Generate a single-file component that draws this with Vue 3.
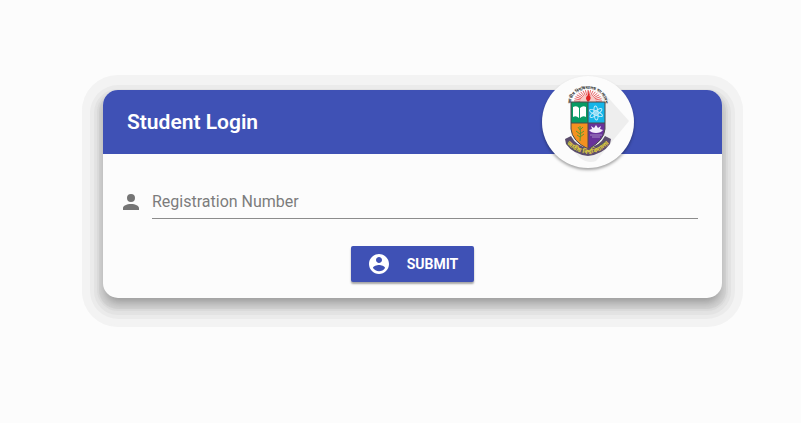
<template>
  <main class="login-page">
    <form class="login-card" @submit.prevent="handleSubmit">
      <header class="login-header">
        <h1>Student Login</h1>
        <div class="logo">
          <svg viewBox="0 0 92 92" role="img" aria-label="জাতীয় বিশ্ববিদ্যালয়">
            <defs>
              <clipPath id="shield-clip">
                <path d="M29 26H63V53Q62 65 46 73Q30 65 29 53Z" />
              </clipPath>
              <path id="motto-arc" d="M29 27A17 14 0 0 1 63 27" />
              <path id="ribbon-arc" d="M24 66Q31 76 46 78Q61 76 68 66" />
            </defs>
            <path class="long-shadow" d="M62 17L87 45L54 85Q46 88 38 82L26 69Z" />

            <!-- sun -->
            <g class="rays">
              <line v-for="ray in rays" :key="ray.id" :x1="ray.x1" :y1="ray.y1" :x2="ray.x2" :y2="ray.y2" />
            </g>
            <path class="sun" d="M38 26A8 7 0 0 1 54 26Z" />
            <path class="flame" d="M46 26Q42 22 46 19Q45 16 47 14Q46 18 48 20Q50 23 46 26Z" />
            <text class="motto">
              <textPath href="#motto-arc" startOffset="50%" text-anchor="middle">জাতীয় বিশ্ববিদ্যালয় বাংলাদেশ</textPath>
            </text>

            <!-- shield -->
            <g clip-path="url(#shield-clip)">
              <rect x="28" y="25" width="18" height="22" fill="#069b65" />
              <rect x="46" y="25" width="18" height="22" fill="#13b5e8" />
              <rect x="28" y="47" width="18" height="28" fill="#f59120" />
              <rect x="46" y="47" width="18" height="28" fill="#68329a" />
            </g>
            <path class="book" d="M31 31Q35 29 37 32V42Q34 39 31 41ZM38 32Q41 29 44 31V41Q41 39 38 42Z" />
            <g class="atom">
              <ellipse cx="54" cy="37" rx="7" ry="2" transform="rotate(25 54 37)" />
              <ellipse cx="54" cy="37" rx="7" ry="2" transform="rotate(85 54 37)" />
              <ellipse cx="54" cy="37" rx="7" ry="2" transform="rotate(145 54 37)" />
              <circle cx="54" cy="37" r="1" />
            </g>
            <g class="plant">
              <path d="M38 65Q39 58 38 50" />
              <path d="M38 54L36 51M38 54L41 51M38 58L34 55M38 58L42 55M38 61L35 59M38 61L42 58" />
            </g>
            <path class="lotus" d="M47 54L50 53L49 50L52 52L54 49L56 52L59 50L58 53L61 54Q59 57 54 57Q49 57 47 54Z" />
            <path class="water" d="M48 59H60M50 61H58" />
            <path class="shield-outline" d="M29 26H63V53Q62 65 46 73Q30 65 29 53ZM46 26V72M29 47H63" />

            <!-- ribbon -->
            <path class="ribbon" d="M23 63L29 60Q34 70 46 72Q58 70 63 60L69 63L68 68Q61 78 46 80Q31 78 24 68Z" />
            <text class="ribbon-text">
              <textPath href="#ribbon-arc" startOffset="50%" text-anchor="middle">জাতীয় বিশ্ববিদ্যালয়</textPath>
            </text>
          </svg>
        </div>
      </header>

      <div class="login-body">
        <div class="field">
          <label for="registration" aria-label="Registration Number">
            <svg class="icon" viewBox="0 0 24 24" aria-hidden="true">
              <path d="M12 4a4 4 0 1 1 0 8 4 4 0 0 1 0-8m0 10c4.42 0 8 1.79 8 4v2H4v-2c0-2.21 3.58-4 8-4Z" />
            </svg>
          </label>
          <input id="registration" v-model="registration" type="text" placeholder="Registration Number" />
        </div>
        <button class="submit-btn" type="submit">
          <svg class="icon" viewBox="0 0 24 24" aria-hidden="true">
            <path d="M12 2C6.48 2 2 6.48 2 12s4.48 10 10 10 10-4.48 10-10S17.52 2 12 2m0 3c1.66 0 3 1.34 3 3s-1.34 3-3 3-3-1.34-3-3 1.34-3 3-3m0 14.2c-2.5 0-4.71-1.28-6-3.22.03-1.99 4-3.08 6-3.08s5.97 1.09 6 3.08a7.2 7.2 0 0 1-6 3.22Z" />
          </svg>
          <span>Submit</span>
        </button>
      </div>
    </form>
  </main>
</template>

<script setup>
import { ref } from 'vue'

const registration = ref('')

// Rays fan out over the top of the shield
const rays = Array.from({ length: 17 }, (_, i) => {
  const angle = Math.PI * (1 + (i + 0.5) / 17)
  return {
    id: i,
    x1: 46 + Math.cos(angle) * 6,
    y1: 26 + Math.sin(angle) * 6,
    x2: 46 + Math.cos(angle) * 14,
    y2: 26 + Math.sin(angle) * 12
  }
})

const handleSubmit = () => {
  registration.value = registration.value.trim()
}
</script>

<style>
body {
  margin: 0;
  background: #fcfcfc;
}
</style>

<style scoped>
.login-page {
  padding: 90px 79px 90px 103px;
  font-family: Roboto, "Noto Sans", sans-serif;
}

.login-card {
  border-radius: 15px;
  background: #fcfcfc;
  box-shadow:
    0 7px 8px -4px rgba(0, 0, 0, 0.2),
    0 7px 8px 0 rgba(0, 0, 0, 0.1),
    0 7px 0 4px #d4d4d4,
    0 7px 0 6px #dcdcdc,
    0 8px 0 9px #e3e3e3,
    0 8px 0 13px #ebebeb,
    0 6px 0 21px #f3f3f3,
    0 8px 0 21px #f3f3f3;
}

.login-header {
  position: relative;
  display: flex;
  align-items: center;
  height: 64px;
  padding: 0 24px;
  border-radius: 15px 15px 0 0;
  background: #3f51b5;
  color: #fff;
}

.login-header h1 {
  margin: 0;
  font-size: 21px;
  font-weight: 600;
  line-height: 24px;
}

.logo {
  position: absolute;
  top: -14px;
  right: 88px;
  width: 92px;
  height: 92px;
  border-radius: 50%;
  background: #fcfcfc;
  box-shadow: 0 2px 3px rgba(0, 0, 0, 0.35);
}

.logo svg {
  display: block;
  width: 100%;
  height: 100%;
}

.long-shadow {
  fill: #eeeeee;
}

.rays {
  stroke: #e86060;
  stroke-width: 1;
}

.sun {
  fill: #f7c9c5;
}

.flame {
  fill: #e02424;
}

.motto {
  fill: #333;
  font-family: "Noto Sans Bengali", "Noto Sans", sans-serif;
  font-size: 4px;
  font-weight: 700;
}

.book {
  fill: #fff;
}

.atom {
  fill: none;
  stroke: #c4ecfa;
  stroke-width: 1;
}

.plant {
  fill: none;
  stroke: #5c9a2e;
  stroke-width: 1;
}

.lotus {
  fill: #f4eefa;
}

.water {
  stroke: #a78ac5;
  stroke-width: 1;
}

.shield-outline {
  fill: none;
  stroke: #4b4b4b;
  stroke-width: 1;
}

.ribbon {
  fill: #5b4d6c;
}

.ribbon-text {
  fill: #e0d03c;
  font-family: "Noto Sans Bengali", "Noto Sans", sans-serif;
  font-size: 6px;
  font-weight: 700;
}

.login-body {
  display: flex;
  flex-direction: column;
  align-items: center;
  gap: 27px;
  padding: 33px 24px 16px 16px;
}

.field {
  display: flex;
  align-items: center;
  align-self: stretch;
  gap: 9px;
}

.field label {
  display: flex;
  padding-bottom: 2px;
  color: #757575;
}

.icon {
  width: 24px;
  height: 24px;
  fill: currentColor;
}

.field input {
  flex: 1;
  min-width: 0;
  height: 32px;
  box-sizing: border-box;
  padding: 0 0 2px;
  border: 0;
  border-bottom: 1px solid #8c8c8c;
  border-radius: 0;
  background: transparent;
  color: #212121;
  font: inherit;
  font-size: 16px;
  outline: none;
}

.field input::placeholder {
  color: #7c7c7c;
  opacity: 1;
}

.field input:focus {
  border-bottom-color: #3f51b5;
}

.submit-btn {
  display: flex;
  align-items: center;
  gap: 16px;
  height: 36px;
  margin-left: 8px;
  padding: 0 16px;
  border: 0;
  border-radius: 2px;
  background: #3f51b5;
  box-shadow: 0 2px 2px rgba(0, 0, 0, 0.35);
  color: #fff;
  font: inherit;
  font-size: 14px;
  font-weight: 700;
  text-transform: uppercase;
  cursor: pointer;
}

.submit-btn:hover {
  background: #3949a3;
}
</style>
